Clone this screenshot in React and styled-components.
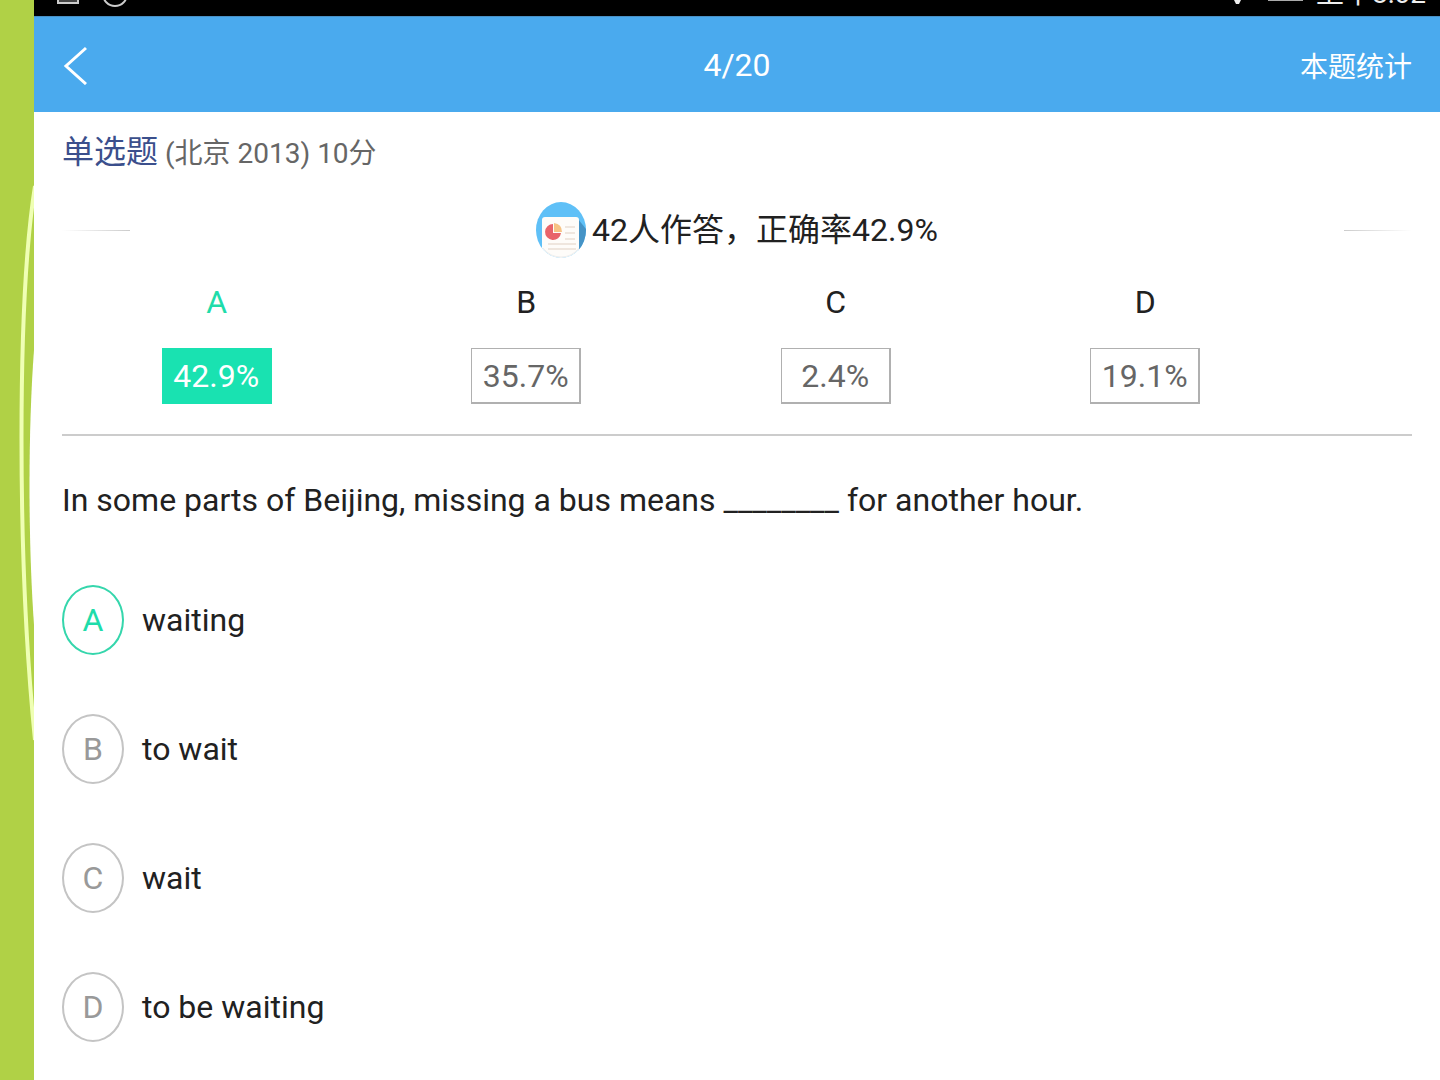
import React from 'react';
import styled, { createGlobalStyle } from 'styled-components';

const stats = [
  { letter: 'A', percent: '42.9%', correct: true },
  { letter: 'B', percent: '35.7%' },
  { letter: 'C', percent: '2.4%' },
  { letter: 'D', percent: '19.1%' },
];

const options = [
  { letter: 'A', text: 'waiting', correct: true },
  { letter: 'B', text: 'to wait' },
  { letter: 'C', text: 'wait' },
  { letter: 'D', text: 'to be waiting' },
];

const ReportIcon = () => (
  <svg width="50" height="56" viewBox="0 0 50 56" aria-hidden="true">
    <defs>
      <clipPath id="disc">
        <ellipse cx="25" cy="28" rx="25" ry="28" />
      </clipPath>
    </defs>
    <g clipPath="url(#disc)">
      <rect width="50" height="56" fill="#5fc0f7" />
      <path d="M42 17 50 27v29H42z" fill="#4593c6" />
      <path d="M6 56V18q0-3 3-3h31q3 0 3 3v38z" fill="#fefcf9" />
      <path d="M17 22a8 8 0 1 0 8 9h-8z" fill="#e8646a" />
      <path d="M18 21v9h8q0-8-8-9z" fill="#f7c384" />
      <path
        d="M29 25h10M29 31h10M29 37h10M12 42h28M12 47h28"
        stroke="#efe6de"
        strokeWidth="2"
      />
    </g>
    <path d="M7 46Q14 55 25 55t18-9" fill="none" stroke="#eee" />
  </svg>
);

const App = () => {
  return (
    <Page lang="zh-CN">
      <GlobalStyle />
      <Side>
        <svg width="34" height="760" aria-hidden="true">
          <path d="M34 350C28 430 28 540 34 625z" fill="#fff" />
          <path
            d="M35 186C17 300 17 560 35 740"
            fill="none"
            stroke="#efffb4"
            strokeWidth="4"
          />
        </svg>
      </Side>
      <Screen>
        <StatusBar>
          <svg width="74" height="16" fill="none" stroke="#ccc" strokeWidth="2" aria-hidden="true">
            <path d="M2-10V3h20V-10" fill="#444" />
            <circle cx="59" cy="-6" r="12" />
          </svg>
          <StatusRight>
            <svg width="76" height="16" aria-hidden="true">
              <path d="M4 0h7l-2 4h-3z" fill="#eee" />
              <path d="M38 0h35" stroke="#aaa" strokeWidth="2" />
            </svg>
            <Clock>上午8:02</Clock>
          </StatusRight>
        </StatusBar>
        <Header>
          <BackButton aria-label="返回">
            <svg width="28" height="40" viewBox="0 0 28 40" fill="none" stroke="#fff" strokeWidth="3">
              <path d="M24 3 4 21 24 39" />
            </svg>
          </BackButton>
          <Counter>4/20</Counter>
          <StatsButton>本题统计</StatsButton>
        </Header>
        <Content>
          <Kind>
            <KindName>单选题</KindName> (北京 2013) 10分
          </Kind>
          <Summary>
            <Fade $to="right" />
            <SummaryText>
              <ReportIcon />
              <span>42人作答，正确率42.9%</span>
            </SummaryText>
            <Fade $to="left" />
          </Summary>
          <StatGrid>
            {stats.map(({ letter, percent, correct }) => (
              <Stat key={letter}>
                <StatLetter $correct={correct}>{letter}</StatLetter>
                <Percent $correct={correct}>{percent}</Percent>
              </Stat>
            ))}
          </StatGrid>
          <Question>
            In some parts of Beijing, missing a bus means ________ for another hour.
          </Question>
          <OptionList>
            {options.map(({ letter, text, correct }) => (
              <Option key={letter}>
                <Badge $correct={correct}>{letter}</Badge>
                {text}
              </Option>
            ))}
          </OptionList>
        </Content>
      </Screen>
    </Page>
  );
};

export default App;

const GlobalStyle = createGlobalStyle`
  * {
    box-sizing: border-box;
  }
  body {
    margin: 0;
    background: #fff;
    color: #212121;
    font-family: Roboto, 'Noto Sans CJK SC', sans-serif;
    font-size: 32px;
    line-height: 40px;
  }
  button {
    border: 0;
    padding: 0;
    background: none;
    color: inherit;
    font: inherit;
    cursor: pointer;
  }
`;

const Page = styled.div`
  display: flex;
  min-height: 100vh;
`;

const Side = styled.div`
  flex: 0 0 34px;
  overflow: hidden;
  background: #b0d146;
`;

const Screen = styled.main`
  flex: 1;
  min-width: 0;
`;

const StatusBar = styled.div`
  display: flex;
  justify-content: space-between;
  height: 16px;
  padding: 0 14px 0 22px;
  overflow: hidden;
  background: #000;
  color: #eee;
`;

const StatusRight = styled.div`
  display: flex;
  align-items: flex-end;
  gap: 10px;
`;

const Clock = styled.span`
  padding-bottom: 2px;
  font-size: 28px;
  line-height: 40px;
`;

const Header = styled.header`
  display: grid;
  grid-template-columns: 1fr auto 1fr;
  align-items: center;
  height: 96px;
  padding: 0 28px;
  border-top: 1px solid #4a90c4;
  background: #4aaaee;
  color: #fff;
`;

const BackButton = styled.button`
  display: flex;
  justify-self: start;
`;

const Counter = styled.span``;

const StatsButton = styled.button`
  justify-self: end;
  padding-top: 6px;
  font-size: 28px;
`;

const Content = styled.div`
  padding: 20px 28px;
`;

const Kind = styled.div`
  color: #666;
  font-size: 28px;
`;

const KindName = styled.span`
  color: #3b4f8c;
  font-size: 32px;
`;

const Summary = styled.div`
  display: flex;
  align-items: center;
  justify-content: space-between;
  margin-top: 28px;
`;

const Fade = styled.span`
  width: 68px;
  height: 1px;
  background: linear-gradient(to ${({ $to }) => $to}, #fff, #ccc);
`;

const SummaryText = styled.div`
  display: flex;
  align-items: center;
  gap: 6px;
`;

const StatGrid = styled.div`
  display: grid;
  grid-template-columns: repeat(4, 1fr);
  padding: 24px 112px 30px 0;
  border-bottom: 2px solid #ccc;
`;

const Stat = styled.div`
  display: flex;
  flex-direction: column;
  align-items: center;
  gap: 26px;
`;

const StatLetter = styled.span`
  color: ${({ $correct }) => ($correct ? '#1fdcaa' : '#212121')};
`;

const Percent = styled.span`
  width: 110px;
  padding: 7px 0 6px;
  border: solid ${({ $correct }) => ($correct ? '#19e2b1' : '#b0b0b0')};
  border-width: 1px 2px 2px 1px;
  background: ${({ $correct }) => ($correct ? '#19e2b1' : '#fff')};
  color: ${({ $correct }) => ($correct ? '#fff' : '#666')};
  text-align: center;
`;

const Question = styled.p`
  margin: 44px 0 0;
`;

const OptionList = styled.ul`
  display: flex;
  flex-direction: column;
  gap: 59px;
  margin: 65px 0 0;
  padding: 0;
  list-style: none;
`;

const Option = styled.li`
  display: flex;
  align-items: center;
  gap: 18px;
`;

const Badge = styled.span`
  display: flex;
  align-items: center;
  justify-content: center;
  width: 62px;
  height: 70px;
  border: 2px solid ${({ $correct }) => ($correct ? '#35d6ac' : '#c4c4c4')};
  border-radius: 50%;
  color: ${({ $correct }) => ($correct ? '#1fdcaa' : '#999')};
`;
